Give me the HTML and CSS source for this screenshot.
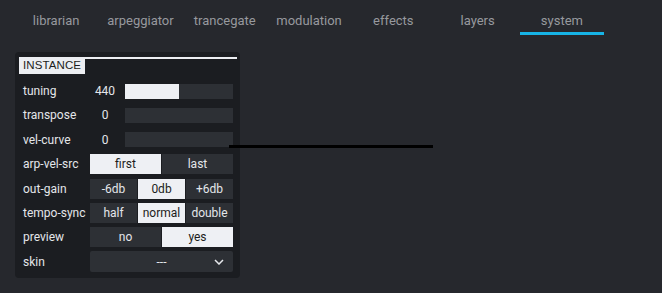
FILE: index.html
```html
<!DOCTYPE html>
<html lang="en">
<head>
  <meta charset="UTF-8">
  <title>system</title>
  <link rel="stylesheet" href="styles.css">
</head>
<body>
<nav class="tabs">
  <a class="tab">librarian</a>
  <a class="tab">arpeggiator</a>
  <a class="tab">trancegate</a>
  <a class="tab">modulation</a>
  <a class="tab">effects</a>
  <a class="tab">layers</a>
  <a class="tab active">system</a>
</nav>

<div class="panel">
  <div class="panel-head"><span class="panel-title">INSTANCE</span><span class="panel-rule"></span></div>
  <div class="rows">
    <div class="row">
      <span class="lbl">tuning</span>
      <span class="val">440</span>
      <div class="slider"><div class="fill" style="width:50%"></div></div>
    </div>
    <div class="row">
      <span class="lbl">transpose</span>
      <span class="val">0</span>
      <div class="slider"></div>
    </div>
    <div class="row">
      <span class="lbl">vel-curve</span>
      <span class="val">0</span>
      <div class="slider"></div>
    </div>
    <div class="row">
      <span class="lbl">arp-vel-src</span>
      <div class="seg two"><span class="on">first</span><span>last</span></div>
    </div>
    <div class="row">
      <span class="lbl">out-gain</span>
      <div class="seg three"><span>-6db</span><span class="on">0db</span><span>+6db</span></div>
    </div>
    <div class="row">
      <span class="lbl">tempo-sync</span>
      <div class="seg three"><span>half</span><span class="on">normal</span><span>double</span></div>
    </div>
    <div class="row">
      <span class="lbl">preview</span>
      <div class="seg two"><span>no</span><span class="on">yes</span></div>
    </div>
    <div class="row">
      <span class="lbl">skin</span>
      <div class="select">
        <span>---</span>
        <svg class="chev" width="10" height="6" viewBox="0 0 10 6"><path d="M1 1 L5 5 L9 1" fill="none" stroke="#e6e8ec" stroke-width="1.5"/></svg>
      </div>
    </div>
  </div>
</div>

<!-- stray drag line -->
<div class="drag-line"></div>
</body>
</html>
```

FILE: styles.css
```css
html, body {
  margin: 0;
  padding: 0;
  background: #26282d;
  font-family: Roboto, 'Liberation Sans', sans-serif;
  width: 662px;
  height: 293px;
  overflow: hidden;
}
.tabs {
  display: flex;
  padding-left: 14px;
  height: 35px;
}
.tab {
  width: 84.3px;
  height: 35px;
  box-sizing: border-box;
  padding-top: 13px;
  text-align: center;
  font-size: 13px;
  color: #97999e;
  line-height: 16px;
}
.tab.active {
  border-bottom: 3px solid #17b4e6;
}
.panel {
  margin: 17px 0 0 15px;
  width: 225px;
  height: 226px;
  box-sizing: border-box;
  background: #1b1d21;
  border-radius: 4px;
  padding: 5px 3px 0 4px;
}
.panel-head {
  display: flex;
  height: 17px;
}
.panel-title {
  background: #eceef2;
  color: #1c1d20;
  font-size: 11.5px;
  line-height: 17px;
  height: 17px;
  padding: 0 4px 0 4px;
  letter-spacing: 0.1px;
  font-family: 'Liberation Sans', sans-serif;
}
.panel-rule {
  flex: 1;
  border-top: 2px solid #eceef2;
}
.rows {
  display: flex;
  flex-direction: column;
  gap: 4.4px;
  margin-top: 7px;
  padding-left: 4px;
}
.row {
  display: flex;
  align-items: center;
  height: 20px;
}
.lbl {
  width: 67px;
  color: #e4e6ea;
  font-size: 12px;
}
.val {
  width: 30px;
  text-align: center;
  color: #e4e6ea;
  font-size: 12px;
  margin-right: 5px;
}
.slider {
  width: 108px;
  height: 15px;
  background: #2d3035;
}
.fill {
  height: 100%;
  background: #eef0f4;
}
.seg {
  display: grid;
  gap: 1px;
  width: 143px;
  height: 20px;
}
.seg.two { grid-template-columns: 1fr 1fr; }
.seg.three { grid-template-columns: 1fr 1fr 1fr; }
.seg span {
  background: #2d3035;
  color: #e4e6ea;
  font-size: 12px;
  text-align: center;
  line-height: 20px;
}
.seg span.on {
  background: #eef0f4;
  color: #1c1d20;
}
.select {
  width: 143px;
  height: 21px;
  background: #2d3035;
  color: #e4e6ea;
  font-size: 12px;
  display: flex;
  align-items: center;
  justify-content: center;
  position: relative;
  border-radius: 2px;
}
.chev {
  position: absolute;
  right: 9px;
  top: 8px;
}
.drag-line {
  position: absolute;
  left: 229px;
  top: 145px;
  width: 204px;
  height: 3px;
  background: #000;
}
```
